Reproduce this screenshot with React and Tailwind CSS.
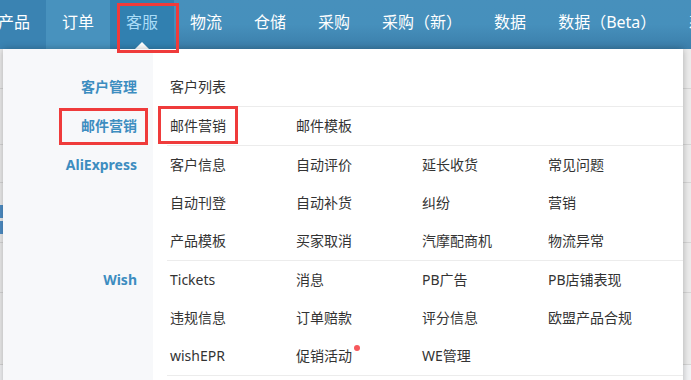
import React from 'react';

const NAV = ['产品', '订单', '客服', '物流', '仓储', '采购', '采购（新）', '数据', '数据（Beta）', '系统'];

const GROUPS = [
  { label: '客户管理', rows: [['客户列表']] },
  { label: '邮件营销', rows: [['邮件营销', '邮件模板']] },
  {
    label: 'AliExpress',
    rows: [
      ['客户信息', '自动评价', '延长收货', '常见问题'],
      ['自动刊登', '自动补货', '纠纷', '营销'],
      ['产品模板', '买家取消', '汽摩配商机', '物流异常'],
    ],
  },
  {
    label: 'Wish',
    rows: [
      ['Tickets', '消息', 'PB广告', 'PB店铺表现'],
      ['违规信息', '订单赔款', '评分信息', '欧盟产品合规'],
      ['wishEPR', '促销活动', 'WE管理'],
    ],
  },
];

const navBg = (name) => {
  if (name === '产品') return 'bg-[#3a83b2]';
  if (name === '订单') return 'bg-[#4892be]';
  if (name === '客服') return 'bg-[#3180b0]';
  return '';
};

const MenuItem = ({ text }) => (
  <div className="w-[126px] shrink-0 flex items-center">
    <span className="relative">
      {text}
      {text === '促销活动' && (
        <span className="absolute -right-[8px] -top-[1px] w-[6px] h-[6px] rounded-full bg-[#f7585c]" />
      )}
    </span>
  </div>
);

const App = () => {
  return (
    <div
      className="relative w-[691px] h-[380px] overflow-hidden bg-[#f2f3f5]"
      style={{ fontFamily: '"Noto Sans", "Noto Sans CJK SC", sans-serif' }}
    >
      {/* top nav */}
      <div className="relative h-[49px] bg-gradient-to-b from-[#4790bc] via-[#4690bc] to-[#3b7eaa] flex text-white text-[16px] whitespace-nowrap">
        <div className="flex -ml-[18px]">
          {NAV.map((name) => (
            <div
              key={name}
              className={`relative h-full px-4 flex items-center pb-[5px] ${navBg(name)} ${
                name === '客服' ? 'text-[#a9dcf7]' : ''
              }`}
            >
              {name}
              {name === '客服' && (
                <span className="absolute left-1/2 -translate-x-1/2 bottom-0 w-0 h-0 border-l-[7px] border-r-[7px] border-b-[7px] border-l-transparent border-r-transparent border-b-white" />
              )}
            </div>
          ))}
        </div>
      </div>

      {/* page behind the menu */}
      <div className="flex flex-col">
        <div className="h-[40px] border-b border-[#d6d6d6] bg-[#ececec]" />
        <div className="h-[56px] border-b border-[#d6d6d6] bg-[#ececec]" />
        <div className="h-[38px] border-b border-[#d6d6d6] bg-[#ececec]" />
        <div className="h-[60px] border-b border-[#d6d6d6] bg-[#ececec] pt-[22px] flex flex-col gap-[3px]">
          <div className="w-[4px] h-[13px] bg-[#4f8fc6]" />
          <div className="w-[4px] h-[13px] bg-[#4f8fc6]" />
        </div>
        <div className="h-[50px] border-b border-[#d6d6d6] bg-[#ececec]" />
        <div className="h-[72px] border-b border-[#d6d6d6] bg-[#ececec]" />
      </div>

      {/* dropdown menu */}
      <div className="absolute left-[3px] top-[49px] w-[680px] h-[340px] pt-[19px] bg-[linear-gradient(to_right,#f7f8fa_150px,#ffffff_150px)] shadow-[0_0_7px_rgba(0,0,0,0.28)] text-[14px] text-[#333]">
        {GROUPS.map((g) => (
          <div key={g.label} className="flex">
            <div className="w-[150px] shrink-0 pr-4 text-right font-bold text-[#3d8dc0] pt-[9px] leading-[20px]">
              {g.label}
            </div>
            <div className="flex-1 ml-[14px] border-b border-[#ececec]">
              {g.rows.map((row, i) => (
                <div key={i} className="flex h-[38px] leading-[20px] pl-[3px]">
                  {row.map((t) => (
                    <MenuItem key={t} text={t} />
                  ))}
                </div>
              ))}
            </div>
          </div>
        ))}
      </div>

      {/* red highlight boxes */}
      <div className="absolute left-[117px] top-[3px] w-[62px] h-[50px] border-[3px] border-[#ef3b3b]" />
      <div className="absolute left-[59px] top-[108px] w-[89px] h-[37px] border-[3px] border-[#ef3b3b]" />
      <div className="absolute left-[158px] top-[106px] w-[80px] h-[38px] border-[3px] border-[#ef3b3b]" />
    </div>
  );
};

export default App;
